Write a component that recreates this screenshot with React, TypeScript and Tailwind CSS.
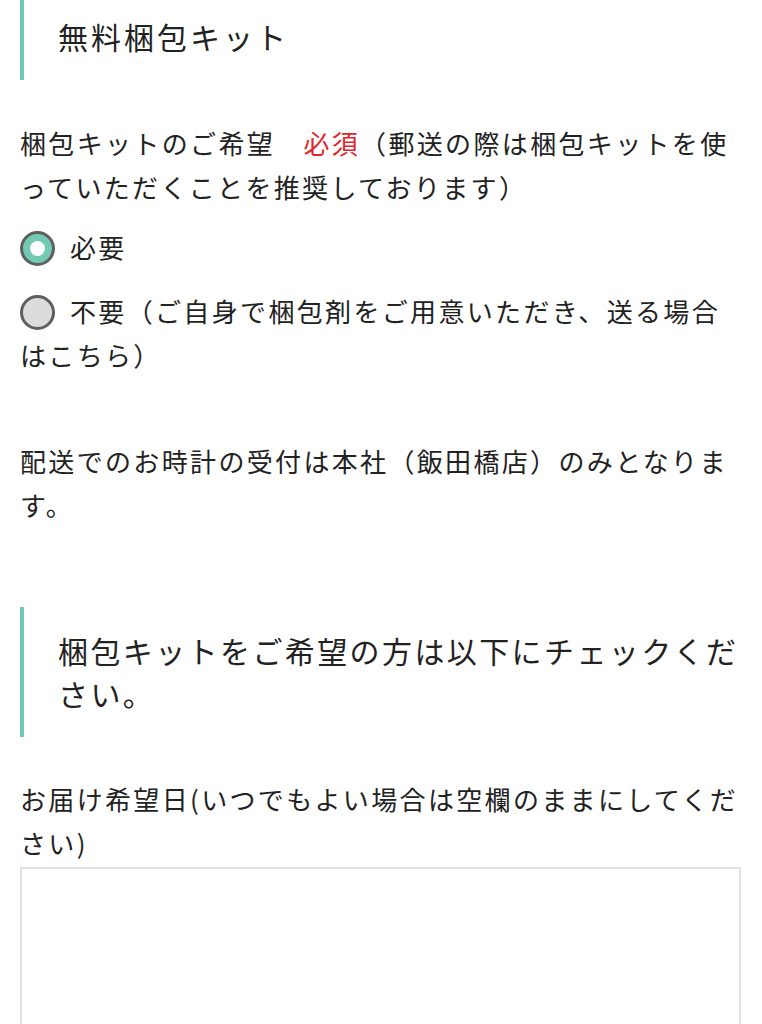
import React, { useState } from 'react';

const font = { fontFamily: '"Noto Sans CJK JP", "Noto Sans", sans-serif' };

type Choice = 'need' | 'none';

const Radio: React.FC<{ checked: boolean }> = ({ checked }) => (
  <span
    className={`inline-flex items-center justify-center align-middle w-[35px] h-[35px] rounded-full border-[3px] border-[#5f5f5f] mr-[15px] -mt-[4px] ${
      checked ? 'bg-[#72cab5]' : 'bg-[#dcdcdc]'
    }`}
  >
    {checked && <span className="block w-[15px] h-[15px] rounded-full bg-white" />}
  </span>
);

const App: React.FC = () => {
  const [choice, setChoice] = useState<Choice>('need');
  const [date, setDate] = useState('');

  return (
    <div className="min-h-screen bg-white text-[#222] pl-[20px] pr-[21px]" style={font}>
      <h2 className="border-l-4 border-[#70c9b2] pl-[34px] pt-[15px] pb-[22px] text-[30px] leading-[43px] tracking-[0.1em] font-normal">
        無料梱包キット
      </h2>

      <p className="mt-[41px] text-[26px] leading-[44px] tracking-[0.09em]">
        梱包キットのご希望　<span className="text-[#e0262b]">必須</span>（郵送の際は梱包キットを使っていただくことを推奨しております）
      </p>

      <div className="text-[26px] leading-[44px] tracking-[0.09em]">
        <label className="block mt-[16px] cursor-pointer" onClick={() => setChoice('need')}>
          <Radio checked={choice === 'need'} />
          必要
        </label>
        <label className="block mt-[20px] cursor-pointer" onClick={() => setChoice('none')}>
          <Radio checked={choice === 'none'} />
          不要（ご自身で梱包剤をご用意いただき、送る場合はこちら）
        </label>
      </div>

      <p className="mt-[62px] text-[26px] leading-[44px] tracking-[0.09em]">
        配送でのお時計の受付は本社（飯田橋店）のみとなります。
      </p>

      <h2 className="mt-[80px] border-l-4 border-[#70c9b2] pl-[34px] py-[22px] text-[30px] leading-[43px] tracking-[0.08em] font-normal">
        梱包キットをご希望の方は以下にチェックください。
      </h2>

      <label className="block mt-[40px] text-[26px] leading-[44px] tracking-[0.09em]">
        お届け希望日(いつでもよい場合は空欄のままにしてください)
      </label>
      <textarea
        value={date}
        onChange={(e) => setDate(e.target.value)}
        className="block mt-[2px] w-full h-[220px] border-2 border-[#e2e2e2] bg-white outline-none resize-none p-3 text-[26px]"
      />
    </div>
  );
};

export default App;
